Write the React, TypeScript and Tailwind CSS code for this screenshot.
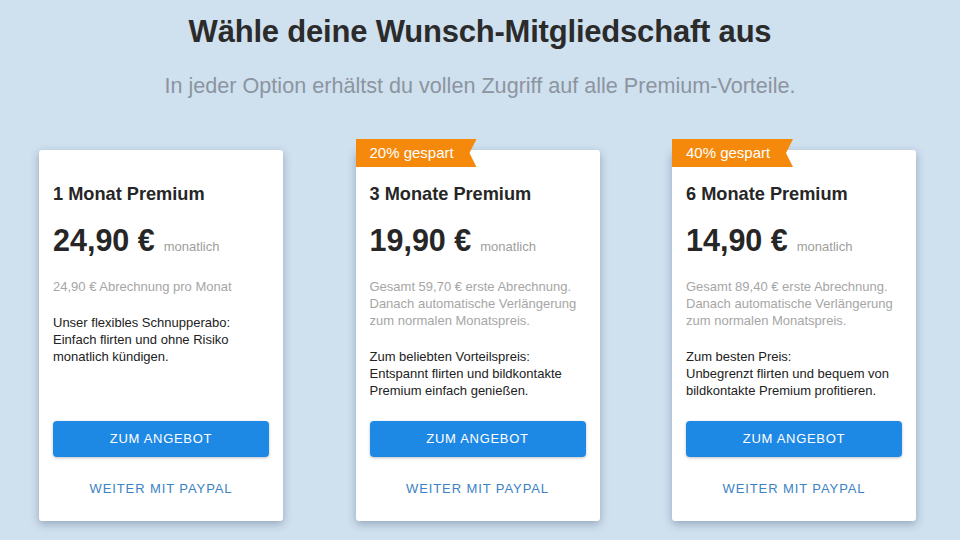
const plans = [
  {
    title: "1 Monat Premium",
    price: "24,90 €",
    badge: "",
    billing: ["24,90 € Abrechnung pro Monat"],
    desc: ["Unser flexibles Schnupperabo:", "Einfach flirten und ohne Risiko", "monatlich kündigen."],
  },
  {
    title: "3 Monate Premium",
    price: "19,90 €",
    badge: "20% gespart",
    billing: ["Gesamt 59,70 € erste Abrechnung.", "Danach automatische Verlängerung", "zum normalen Monatspreis."],
    desc: ["Zum beliebten Vorteilspreis:", "Entspannt flirten und bildkontakte", "Premium einfach genießen."],
  },
  {
    title: "6 Monate Premium",
    price: "14,90 €",
    badge: "40% gespart",
    billing: ["Gesamt 89,40 € erste Abrechnung.", "Danach automatische Verlängerung", "zum normalen Monatspreis."],
    desc: ["Zum besten Preis:", "Unbegrenzt flirten und bequem von", "bildkontakte Premium profitieren."],
  },
];

function PlanCard({ plan }: { plan: (typeof plans)[number] }) {
  return (
    <div className="relative w-[244px] h-[371px] bg-white rounded-[3px] shadow-[0_3px_8px_rgba(40,60,90,0.35)] flex flex-col px-[14px] pt-[32px]">
      {plan.badge && (
        <div className="absolute left-0 top-[-11px] h-[28px] w-[121px] bg-[#f5890c] text-white text-[15px] leading-[28px] pl-[14px] [clip-path:polygon(0_0,100%_0,calc(100%-7px)_50%,100%_100%,0_100%)]">
          {plan.badge}
        </div>
      )}
      <h3 className="text-[18.2px] leading-[24px] font-bold text-[#262626]">{plan.title}</h3>
      <div className="mt-[16px] flex items-baseline">
        <span className="text-[30.5px] leading-[36px] font-bold text-[#262626]">{plan.price}</span>
        <span className="ml-[9px] text-[13px] text-[#9e9e9e]">monatlich</span>
      </div>
      <div className="mt-[20px] text-[13px] leading-[17px] text-[#a6a6a6]">
        {plan.billing.map((l) => (
          <div key={l}>{l}</div>
        ))}
      </div>
      <div className="mt-[19px] text-[13px] leading-[17px] text-[#222222]">
        {plan.desc.map((l) => (
          <div key={l}>{l}</div>
        ))}
      </div>
      <button className="mt-auto h-[36px] w-full rounded-[4px] bg-[#1e88e5] text-white text-[13px] tracking-[0.7px] shadow-[0_1px_3px_rgba(0,0,0,0.25)]">
        ZUM ANGEBOT
      </button>
      <a href="#" className="mt-[14px] mb-[14px] h-[36px] flex items-center justify-center text-[13px] tracking-[0.9px] text-[#3c82c4]">
        WEITER MIT PAYPAL
      </a>
    </div>
  );
}

export default function App() {
  return (
    <div className="w-[960px] h-[540px] overflow-hidden bg-[#cfe0ef] font-['Liberation_Sans',Arial,sans-serif]">
      <h1 className="pt-[14px] text-center text-[31px] leading-[36px] font-bold tracking-[-0.2px] text-[#2b2b2b]">
        Wähle deine Wunsch-Mitgliedschaft aus
      </h1>
      <p className="mt-[23px] text-center text-[21.6px] leading-[26px] text-[#8c959f]">
        In jeder Option erhältst du vollen Zugriff auf alle Premium-Vorteile.
      </p>
      <div className="mt-[51px] flex justify-center gap-[72.5px] pr-[5px]">
        {plans.map((p) => (
          <PlanCard key={p.title} plan={p} />
        ))}
      </div>
    </div>
  );
}
